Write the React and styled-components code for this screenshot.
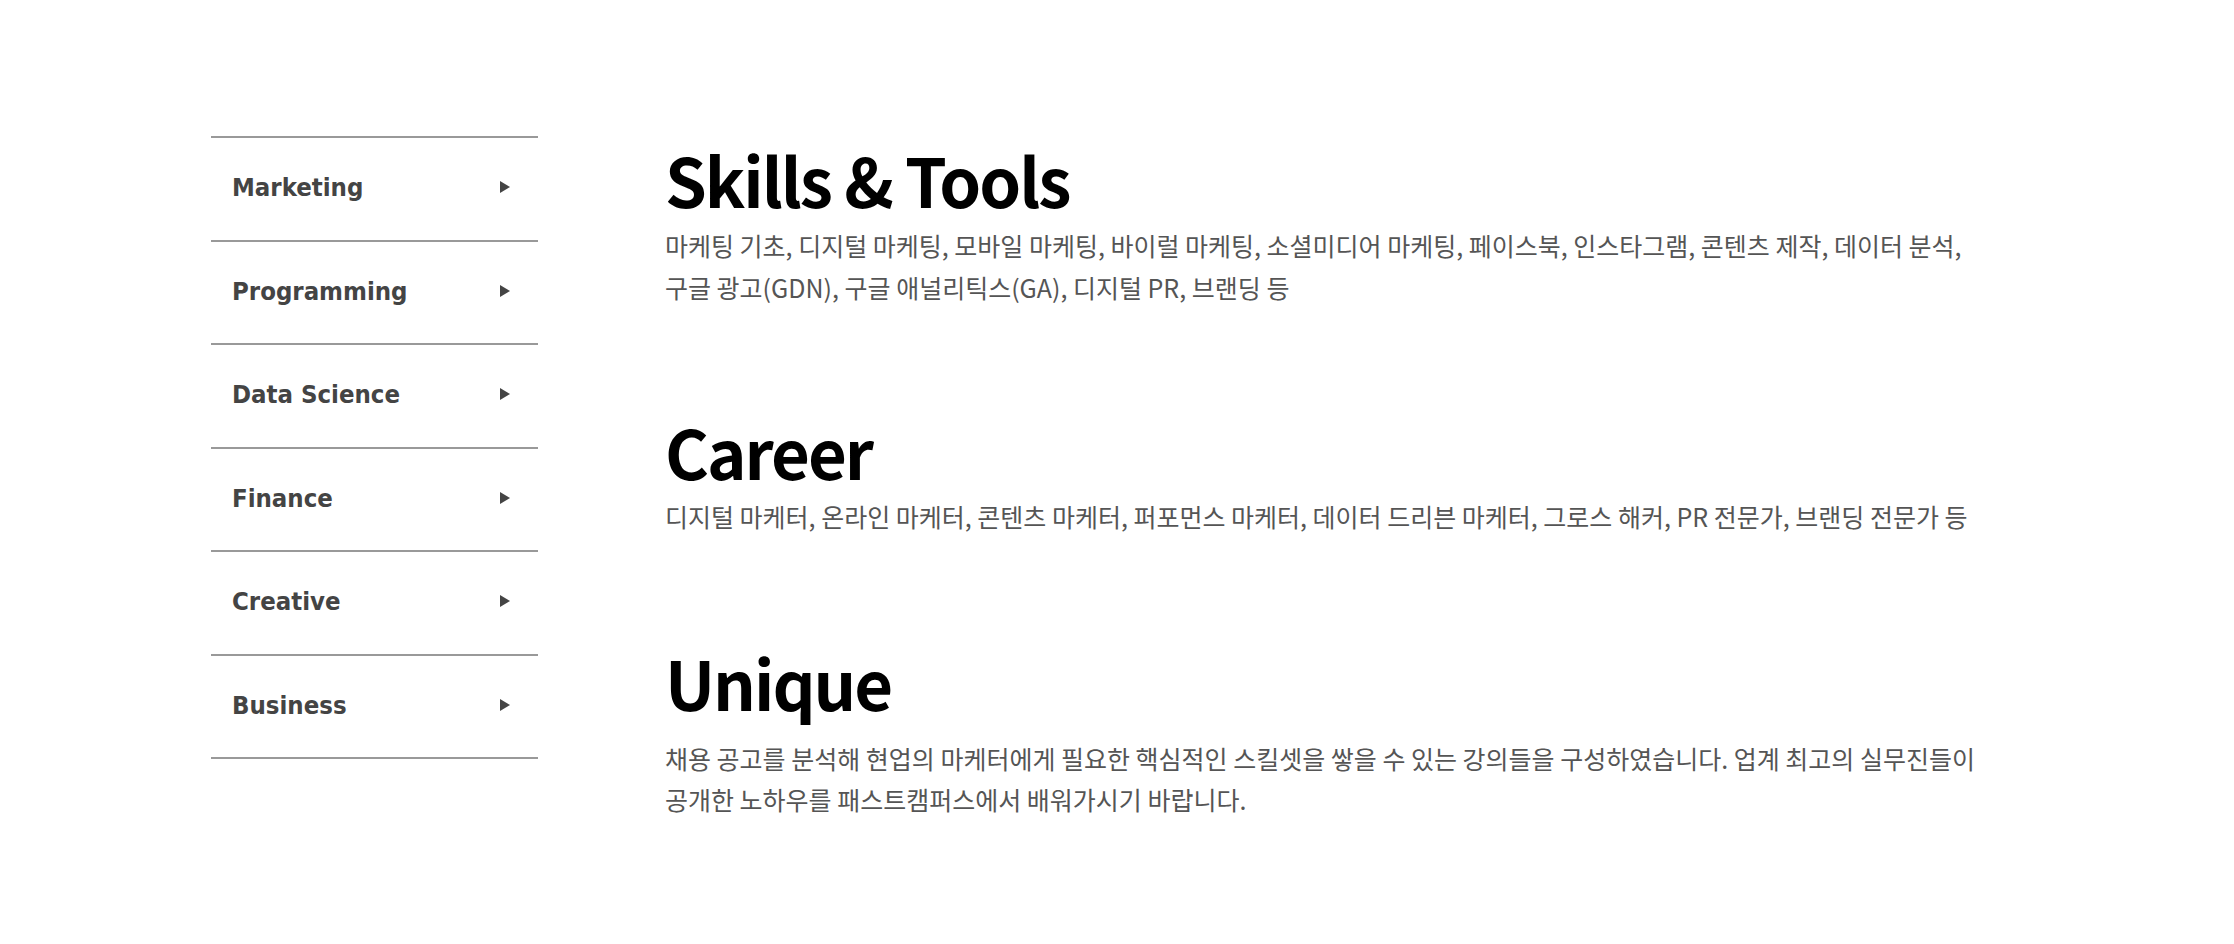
import React from 'react';
import styled, { createGlobalStyle } from 'styled-components';

const GlobalStyle = createGlobalStyle`
  html, body {
    margin: 0;
    padding: 0;
    background: #fff;
  }
  body {
    font-family: "Noto Sans CJK KR", "Noto Sans", sans-serif;
  }
`;

const Page = styled.div`
  display: flex;
  align-items: flex-start;
  padding: 136px 0 0 211px;
`;

const Sidebar = styled.ul`
  list-style: none;
  margin: 0;
  padding: 0;
  width: 327px;
  border-top: 2px solid #999;
`;

const MenuItem = styled.li`
  display: flex;
  align-items: center;
  justify-content: space-between;
  height: 98.5px;
  padding: 0 28px 3px 21px;
  border-bottom: 2px solid #999;
  font-family: "DejaVu Sans Condensed", "DejaVu Sans", sans-serif;
  font-weight: bold;
  font-size: 25.5px;
  color: #444;
  cursor: pointer;
`;

const Arrow = styled.svg`
  width: 10px;
  height: 12px;
  fill: #444;
`;

const Content = styled.div`
  margin: 9px 0 0 127px;
  width: 1330px;
`;

const Section = styled.section`
  margin-bottom: ${p => p.$gap}px;
`;

const Title = styled.h2`
  margin: 0;
  font-family: "Noto Sans CJK KR", "Noto Sans", sans-serif;
  font-weight: 700;
  font-size: 67px;
  line-height: 1;
  letter-spacing: -2px;
  color: #000;
`;

const Text = styled.p`
  margin: ${p => p.$offset}px 0 0;
  font-size: 25px;
  line-height: 41.5px;
  color: #555;
  word-break: keep-all;
`;

const menu = ['Marketing', 'Programming', 'Data Science', 'Finance', 'Creative', 'Business'];

const sections = [
  {
    title: 'Skills & Tools',
    text: '마케팅 기초, 디지털 마케팅, 모바일 마케팅, 바이럴 마케팅, 소셜미디어 마케팅, 페이스북, 인스타그램, 콘텐츠 제작, 데이터 분석, 구글 광고(GDN), 구글 애널리틱스(GA), 디지털 PR, 브랜딩 등',
    offset: 13,
    gap: 109,
  },
  {
    title: 'Career',
    text: '디지털 마케터, 온라인 마케터, 콘텐츠 마케터, 퍼포먼스 마케터, 데이터 드리븐 마케터, 그로스 해커, PR 전문가, 브랜딩 전문가 등',
    offset: 12,
    gap: 110,
  },
  {
    title: 'Unique',
    text: '채용 공고를 분석해 현업의 마케터에게 필요한 핵심적인 스킬셋을 쌓을 수 있는 강의들을 구성하였습니다. 업계 최고의 실무진들이 공개한 노하우를 패스트캠퍼스에서 배워가시기 바랍니다.',
    offset: 23,
    gap: 0,
  },
];

export default function App() {
  return (
    <>
      <GlobalStyle />
      <Page>
        <Sidebar>
          {menu.map(item => (
            <MenuItem key={item}>
              {item}
              <Arrow viewBox="0 0 10 12">
                <polygon points="0,0 10,6 0,12" />
              </Arrow>
            </MenuItem>
          ))}
        </Sidebar>
        <Content>
          {sections.map(s => (
            <Section key={s.title} $gap={s.gap}>
              <Title>{s.title}</Title>
              <Text $offset={s.offset}>{s.text}</Text>
            </Section>
          ))}
        </Content>
      </Page>
    </>
  );
}
